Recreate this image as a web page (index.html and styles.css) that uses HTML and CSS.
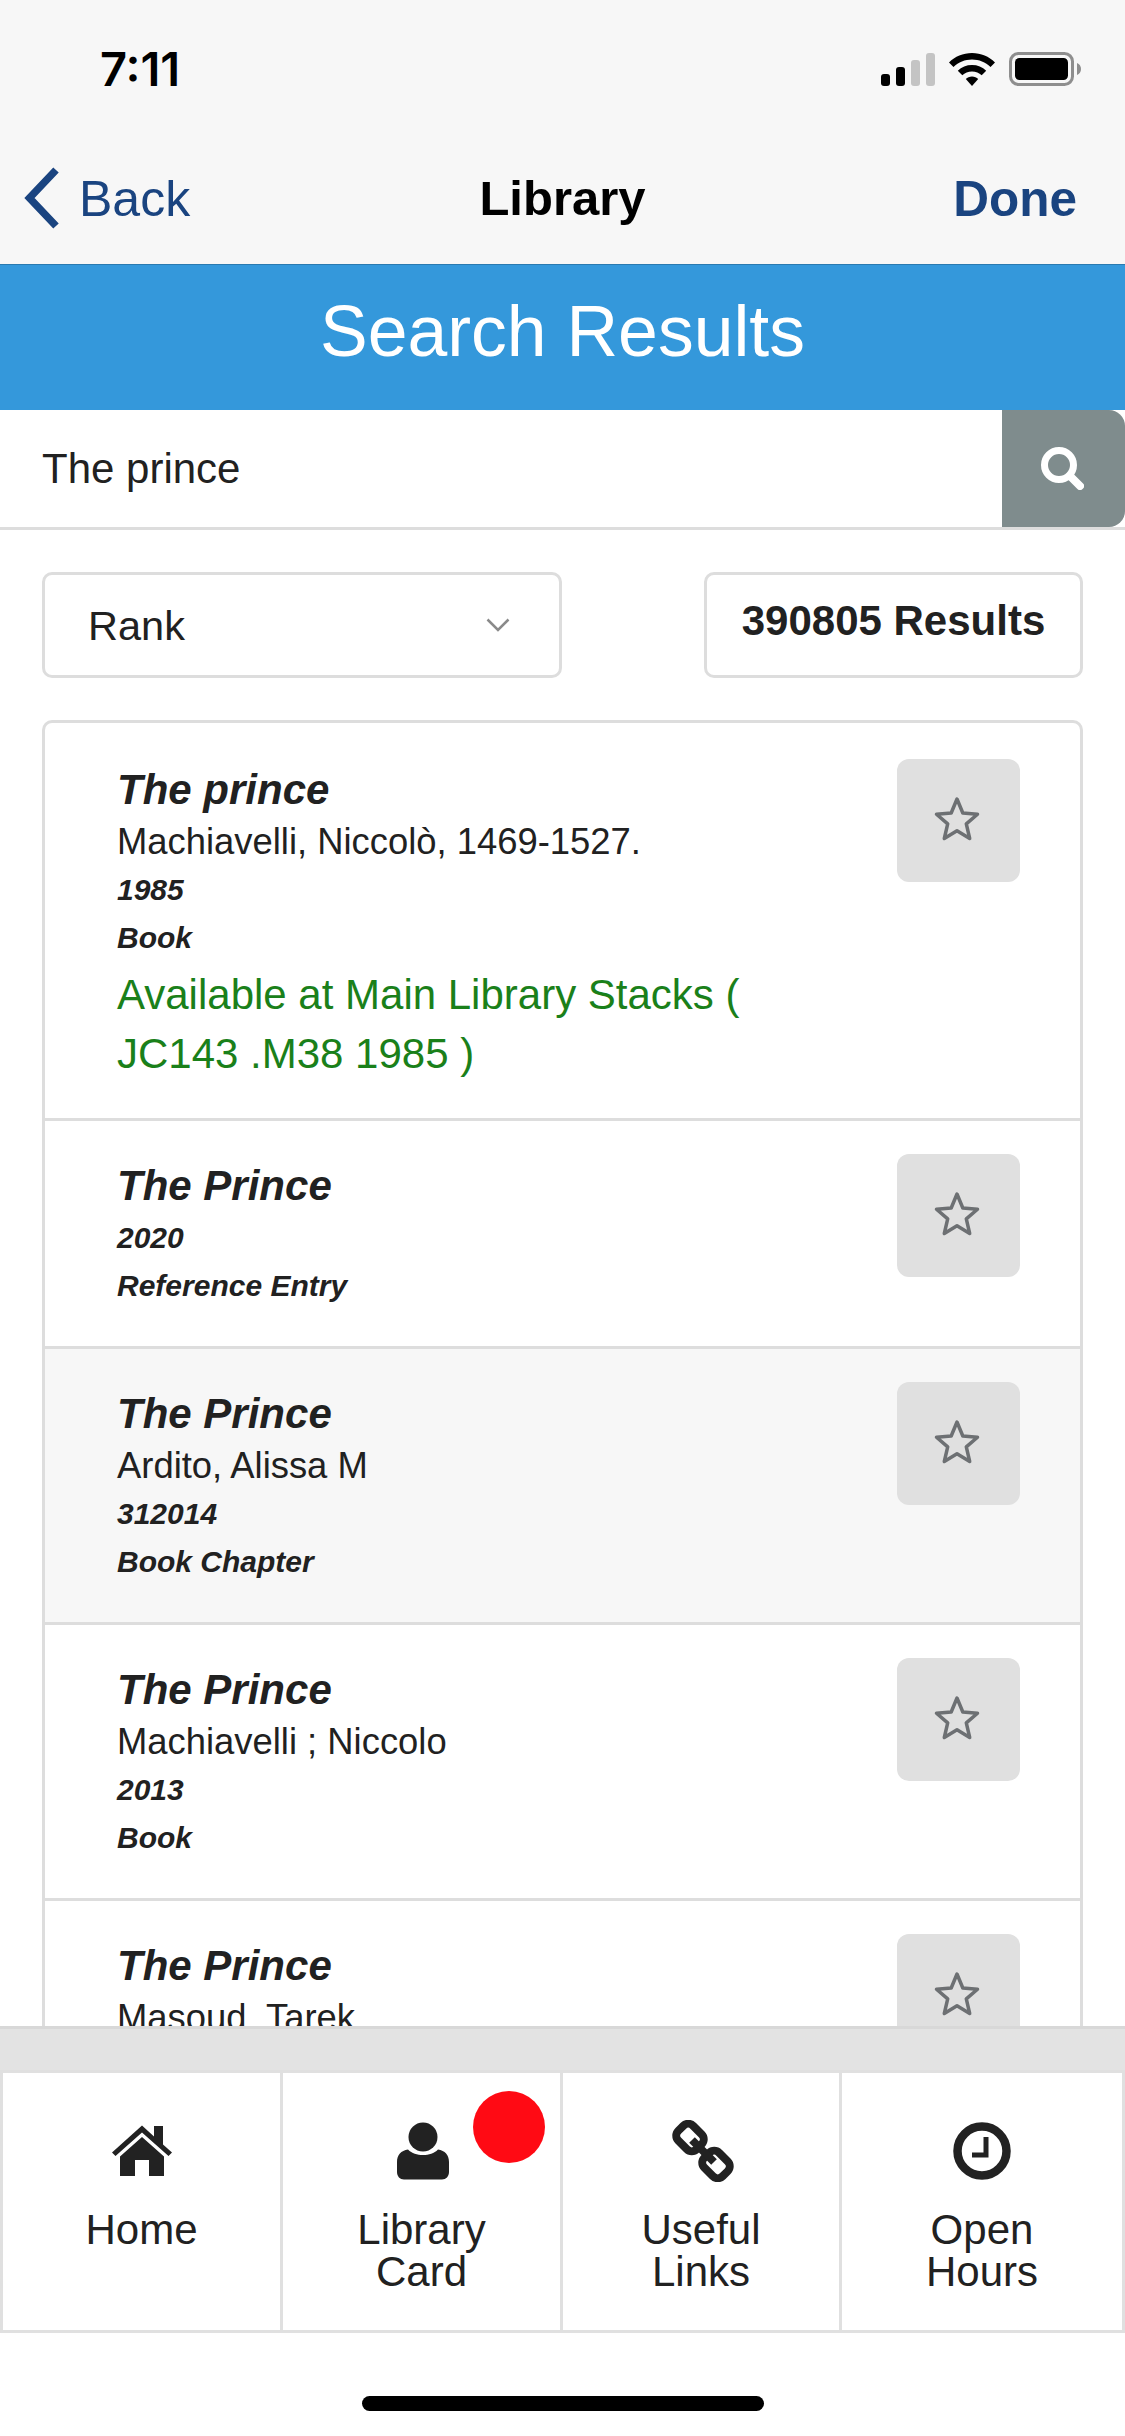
FILE: index.html
```html
<!DOCTYPE html>
<html lang="en">
<head>
<meta charset="utf-8">
<title>Library</title>
<link rel="stylesheet" href="styles.css">
</head>
<body>
<div class="page">
  <header class="chrome">
    <div class="status">
      <span class="time">7:11</span>
      <div class="status-icons">
        <svg class="signal" width="54" height="33" viewBox="0 0 54 33"><rect x="0" y="21" width="9" height="12" rx="3" fill="#000"/><rect x="15" y="14" width="9" height="19" rx="3" fill="#000"/><rect x="30" y="7" width="9" height="26" rx="3" fill="#c4c4c4"/><rect x="45" y="0" width="9" height="33" rx="3" fill="#c4c4c4"/></svg>
        <svg class="wifi" width="46" height="33" viewBox="0 0 46 33"><path d="M23 0C14 0 6 3.500 0 9.500L4.500 14C9.500 9.200 16 6.500 23 6.500S36.500 9.200 41.500 14L46 9.500C40 3.500 32 0 23 0Z" fill="#000"/><path d="M23 12C17.500 12 12.500 14 8.800 17.800L13.300 22.300C15.800 19.800 19.200 18.400 23 18.400S30.200 19.800 32.700 22.300L37.200 17.800C33.500 14 28.500 12 23 12Z" fill="#000"/><path d="M23 23.500C20.500 23.500 18.300 24.500 16.800 26L23 33L29.200 26C27.700 24.500 25.500 23.500 23 23.500Z" fill="#000"/></svg>
        <svg class="battery" width="72" height="34" viewBox="0 0 72 34"><rect x="1.500" y="1.500" width="62" height="31" rx="8" fill="none" stroke="#8e8e8e" stroke-width="3"/><rect x="6" y="6" width="53" height="22" rx="4.500" fill="#000"/><path d="M68 11C70.500 12 72 14 72 17S70.500 22 68 23Z" fill="#8e8e8e"/></svg>
      </div>
    </div>
    <nav class="navbar">
      <a class="back">
        <svg width="38" height="62" viewBox="0 0 38 62"><path d="M33 3L6.500 31L33 59" fill="none" stroke="#1a4480" stroke-width="7.500"/></svg>
        <span>Back</span>
      </a>
      <span class="nav-title">Library</span>
      <a class="done">Done</a>
    </nav>
  </header>

  <h1 class="banner">Search Results</h1>

  <div class="search">
    <span class="search-text">The prince</span>
    <button class="search-btn" aria-label="Search">
      <svg width="44" height="44" viewBox="0 0 44 44"><circle cx="19" cy="19" r="14.500" fill="none" stroke="#fff" stroke-width="7"/><path d="M30 30L40 40" stroke="#fff" stroke-width="8" stroke-linecap="round"/></svg>
    </button>
  </div>

  <main class="content">
    <div class="controls">
      <div class="sort">
        <span>Rank</span>
        <svg width="24" height="14" viewBox="0 0 24 14"><path d="M1.500 1.500L12 12L22.500 1.500" fill="none" stroke="#8a8a8a" stroke-width="2.500"/></svg>
      </div>
      <div class="count">390805 Results</div>
    </div>

    <ul class="results">
      <li class="result">
        <div class="info">
          <div class="title">The prince</div>
          <div class="author">Machiavelli, Niccolò, 1469-1527.</div>
          <div class="meta">1985</div>
          <div class="meta">Book</div>
          <div class="avail">Available at Main Library Stacks (<br>JC143 .M38 1985 )</div>
        </div>
        <button class="fav" aria-label="Favourite"><svg class="star" width="46" height="46" viewBox="0 0 46 46"><path d="M23 3L28.800 17L43.500 18.200L32.300 27.900L35.700 42.500L23 34.700L10.300 42.500L13.700 27.900L2.500 18.200L17.200 17Z" fill="none" stroke="#6d7073" stroke-width="3.500" stroke-linejoin="round"/></svg></button>
      </li>
      <li class="result">
        <div class="info">
          <div class="title">The Prince</div>
          <div class="meta">2020</div>
          <div class="meta">Reference Entry</div>
        </div>
        <button class="fav" aria-label="Favourite"><svg class="star" width="46" height="46" viewBox="0 0 46 46"><path d="M23 3L28.800 17L43.500 18.200L32.300 27.900L35.700 42.500L23 34.700L10.300 42.500L13.700 27.900L2.500 18.200L17.200 17Z" fill="none" stroke="#6d7073" stroke-width="3.500" stroke-linejoin="round"/></svg></button>
      </li>
      <li class="result shaded">
        <div class="info">
          <div class="title">The Prince</div>
          <div class="author">Ardito, Alissa M</div>
          <div class="meta">312014</div>
          <div class="meta">Book Chapter</div>
        </div>
        <button class="fav" aria-label="Favourite"><svg class="star" width="46" height="46" viewBox="0 0 46 46"><path d="M23 3L28.800 17L43.500 18.200L32.300 27.900L35.700 42.500L23 34.700L10.300 42.500L13.700 27.900L2.500 18.200L17.200 17Z" fill="none" stroke="#6d7073" stroke-width="3.500" stroke-linejoin="round"/></svg></button>
      </li>
      <li class="result">
        <div class="info">
          <div class="title">The Prince</div>
          <div class="author">Machiavelli ; Niccolo</div>
          <div class="meta">2013</div>
          <div class="meta">Book</div>
        </div>
        <button class="fav" aria-label="Favourite"><svg class="star" width="46" height="46" viewBox="0 0 46 46"><path d="M23 3L28.800 17L43.500 18.200L32.300 27.900L35.700 42.500L23 34.700L10.300 42.500L13.700 27.900L2.500 18.200L17.200 17Z" fill="none" stroke="#6d7073" stroke-width="3.500" stroke-linejoin="round"/></svg></button>
      </li>
      <li class="result">
        <div class="info">
          <div class="title">The Prince</div>
          <div class="author">Masoud, Tarek</div>
        </div>
        <button class="fav" aria-label="Favourite"><svg class="star" width="46" height="46" viewBox="0 0 46 46"><path d="M23 3L28.800 17L43.500 18.200L32.300 27.900L35.700 42.500L23 34.700L10.300 42.500L13.700 27.900L2.500 18.200L17.200 17Z" fill="none" stroke="#6d7073" stroke-width="3.500" stroke-linejoin="round"/></svg></button>
      </li>
    </ul>
  </main>

  <footer class="footer">
    <div class="strip"></div>
    <div class="tabs">
      <a class="tab">
        <svg class="tab-icon" width="62" height="52" viewBox="0 0 62 52"><path d="M31 0.500L1 27.500L4.500 31L31 7.500L57.500 31L61 27.500L52 19.500V1H43V11.500Z" fill="#222"/><path d="M31 12L9 31.500V51H24V35H38V51H53V31.500Z" fill="#222"/></svg>
        <span>Home</span>
      </a>
      <a class="tab">
        <svg class="tab-icon shifted" width="54" height="58" viewBox="0 0 54 58"><circle cx="27" cy="15" r="14.500" fill="#222"/><path d="M12 27.500C16 31.500 21 33 27 33S38 31.500 42 27.500C49 28.500 53 33 53 40V50C53 54.500 50 57.500 46 57.500H8C4 57.500 1 54.500 1 50V40C1 33 5 28.500 12 27.500Z" fill="#222"/></svg>
        <span>Library<br>Card</span>
        <i class="badge"></i>
      </a>
      <a class="tab">
        <svg class="tab-icon shifted" width="62" height="62" viewBox="0 0 62 62"><g fill="none" stroke="#222" stroke-width="8"><rect x="5" y="7" width="26" height="21" rx="7" transform="rotate(45 18 17.500)"/><rect x="31" y="34" width="26" height="21" rx="7" transform="rotate(45 44 44.500)"/><path d="M20 20L42 42"/></g></svg>
        <span>Useful<br>Links</span>
      </a>
      <a class="tab">
        <svg class="tab-icon" width="58" height="58" viewBox="0 0 58 58"><circle cx="29" cy="29" r="24.500" fill="none" stroke="#222" stroke-width="8.500"/><path d="M33 15V33H19" fill="none" stroke="#222" stroke-width="5"/></svg>
        <span>Open<br>Hours</span>
      </a>
    </div>
    <div class="home-zone"><div class="home-bar"></div></div>
  </footer>
</div>
</body>
</html>
```

FILE: styles.css
```css
* { box-sizing: border-box; }
html, body { margin: 0; padding: 0; }
body { font-family: "Liberation Sans", Arial, sans-serif; color: #212121; background: #fff; }
.page { width: 1125px; height: 2436px; display: flex; flex-direction: column; overflow: hidden; }

.chrome { height: 264px; background: #f7f7f7; flex: none; }
.status { height: 132px; padding: 43px 44px 0 100px; display: flex; justify-content: space-between; align-items: flex-start; }
.time { font-family: "Inter", "Liberation Sans", sans-serif; font-weight: 600; font-size: 47px; line-height: 52px; color: #000; }
.status-icons { display: flex; align-items: center; gap: 14px; padding-top: 9px; }
.navbar { height: 132px; padding: 0 48px 0 23px; display: flex; align-items: center; justify-content: space-between; position: relative; }
.back { display: flex; align-items: center; gap: 18px; color: #1a4480; font-size: 50px; line-height: 60px; }
.back span { padding-top: 2px; }
.back svg { display: block; }
.nav-title { position: absolute; left: 0; right: 0; text-align: center; font-weight: 700; font-size: 49px; line-height: 60px; color: #000; }
.done { font-weight: 700; font-size: 49.500px; line-height: 60px; padding-top: 2px; color: #1a4480; position: relative; }

.banner { flex: none; margin: 0; height: 146px; background: #3498db; border-top: 1px solid #2a7ab0; color: #fff; text-align: center; font-weight: 400; font-size: 71.500px; line-height: 132px; }

.search { flex: none; height: 120px; display: flex; align-items: stretch; justify-content: space-between; border-bottom: 3px solid #ddd; background: #fff; }
.search-text { padding-left: 42px; font-size: 42px; line-height: 117px; }
.search-btn { width: 123px; border: 0; padding: 0 3px 2px 0; background: #7f8c8d; border-radius: 0 16px 16px 0; display: flex; align-items: center; justify-content: center; }

.content { flex: 1; min-height: 0; overflow: hidden; padding: 42px 42px 0; }
.controls { display: flex; justify-content: space-between; }
.sort, .count { height: 106px; border: 3px solid #ddd; border-radius: 10px; background: #fff; }
.sort { width: 520px; padding: 0 49px 0 43px; display: flex; align-items: center; justify-content: space-between; font-size: 41.500px; }
.sort span { padding-top: 2px; }
.count { width: 379px; text-align: center; font-weight: 700; font-size: 42px; line-height: 92px; }

.results { list-style: none; margin: 42px 0 0; padding: 0; border: 3px solid #ddd; border-bottom: 0; border-radius: 10px 10px 0 0; }
.result { display: flex; justify-content: space-between; align-items: flex-start; padding: 36px 60px 36px 72px; border-bottom: 3px solid #ddd; }
.result:first-child .title { margin-top: 2px; }
.result:first-child .avail { margin-top: 3px; }
.result + .result .fav { margin-top: -3px; }
.result.shaded { background: #f7f7f7; }
.title { font-weight: 700; font-style: italic; font-size: 42px; line-height: 57px; }
.author { font-size: 36.400px; line-height: 48px; }
.meta { font-weight: 700; font-style: italic; font-size: 30px; line-height: 48px; }
.avail { color: #1a801a; font-size: 42px; line-height: 59px; margin: 5px 0 -1px; }
.fav { width: 123px; height: 123px; border: 0; padding: 0 3px 4px 0; border-radius: 12px; background: #e0e0e0; display: flex; align-items: center; justify-content: center; flex: none; }
.star { display: block; }

.footer { flex: none; position: relative; background: #fff; }
.strip { height: 44px; background: #e3e3e3; border-top: 3px solid #d8d8d8; }
.tabs { height: 263px; display: grid; grid-template-columns: 277px 280px 279px 1fr; border: 3px solid #e0e0e0; }
.tab { position: relative; display: flex; flex-direction: column; align-items: center; text-align: center; font-size: 42px; line-height: 42px; color: #212121; padding-top: 47px; border-left: 3px solid #e0e0e0; }
.tab:first-child { border-left: 0; }
.tab-icon { display: block; height: 62px; margin-bottom: 27px; }
.tab-icon.shifted { margin-left: 3px; }
.badge { position: absolute; top: 18px; left: 190px; width: 72px; height: 72px; border-radius: 50%; background: #ff0a14; }
.home-zone { height: 103px; position: relative; display: flex; justify-content: center; padding-top: 63px; }
.home-bar { width: 402px; height: 15px; border-radius: 8px; background: #000; }
```
